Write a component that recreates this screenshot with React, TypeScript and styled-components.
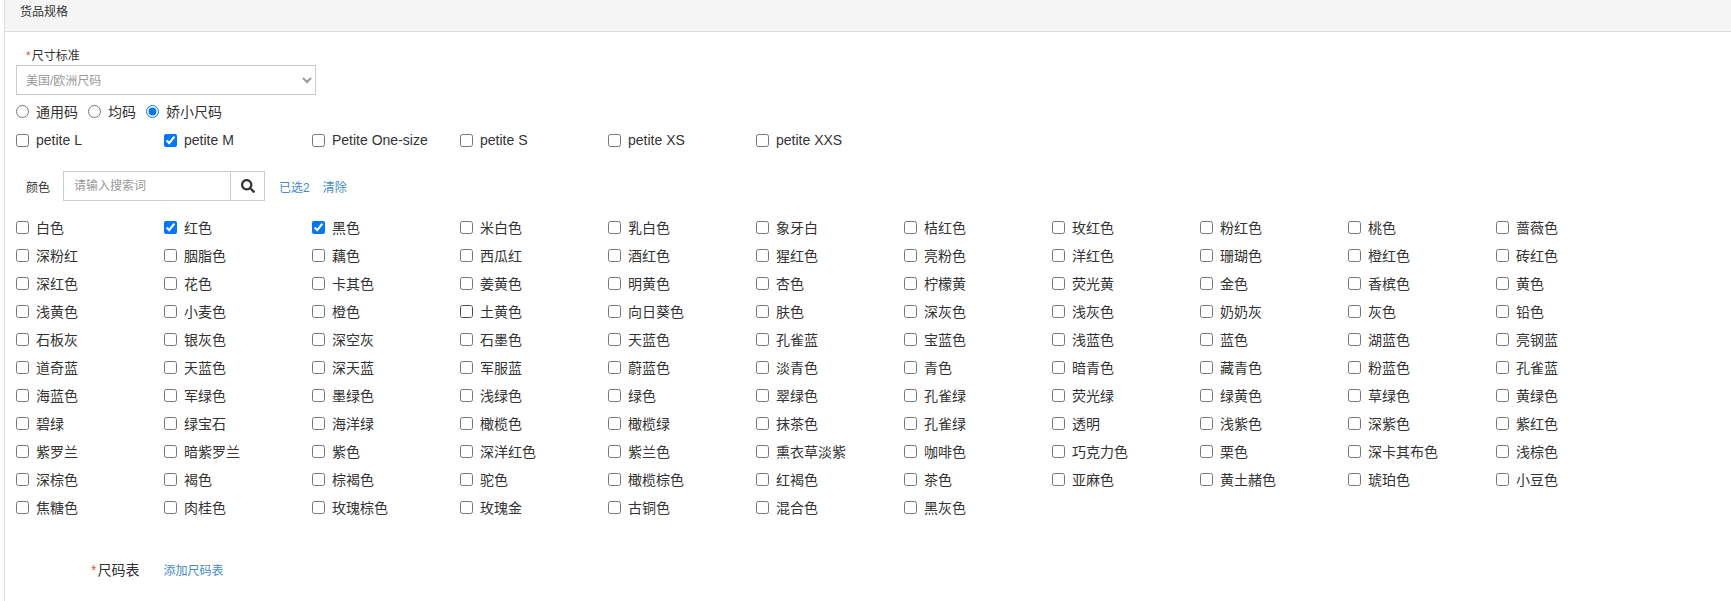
import styled, { createGlobalStyle } from "styled-components"
import { FaSearch } from "react-icons/fa"

const colorRows = [
  "白色 红色 黑色 米白色 乳白色 象牙白 桔红色 玫红色 粉红色 桃色 蔷薇色",
  "深粉红 胭脂色 藕色 西瓜红 酒红色 猩红色 亮粉色 洋红色 珊瑚色 橙红色 砖红色",
  "深红色 花色 卡其色 姜黄色 明黄色 杏色 柠檬黄 荧光黄 金色 香槟色 黄色",
  "浅黄色 小麦色 橙色 土黄色 向日葵色 肤色 深灰色 浅灰色 奶奶灰 灰色 铅色",
  "石板灰 银灰色 深空灰 石墨色 天蓝色 孔雀蓝 宝蓝色 浅蓝色 蓝色 湖蓝色 亮钢蓝",
  "道奇蓝 天蓝色 深天蓝 军服蓝 蔚蓝色 淡青色 青色 暗青色 藏青色 粉蓝色 孔雀蓝",
  "海蓝色 军绿色 墨绿色 浅绿色 绿色 翠绿色 孔雀绿 荧光绿 绿黄色 草绿色 黄绿色",
  "碧绿 绿宝石 海洋绿 橄榄色 橄榄绿 抹茶色 孔雀绿 透明 浅紫色 深紫色 紫红色",
  "紫罗兰 暗紫罗兰 紫色 深洋红色 紫兰色 熏衣草淡紫 咖啡色 巧克力色 栗色 深卡其布色 浅棕色",
  "深棕色 褐色 棕褐色 驼色 橄榄棕色 红褐色 茶色 亚麻色 黄土赭色 琥珀色 小豆色",
  "焦糖色 肉桂色 玫瑰棕色 玫瑰金 古铜色 混合色 黑灰色",
]
const colors = colorRows.join(" ").split(" ")
const sizes = ["petite L", "petite M", "Petite One-size", "petite S", "petite XS", "petite XXS"]
const sizeTypes = ["通用码", "均码", "娇小尺码"]
const checkedColors = [1, 2]
const hoveredColor = 36

export default function App() {
  return (
    <Panel>
      <GlobalStyle />
      <PanelHeader>货品规格</PanelHeader>
      <PanelBody>
        <FieldLabel><Star>*</Star>尺寸标准</FieldLabel>
        <StandardSelect defaultValue="us">
          <option value="us">美国/欧洲尺码</option>
        </StandardSelect>
        <RadioRow>
          {sizeTypes.map((name, i) => (
            <RadioLabel key={name}>
              <input type="radio" name="sizeType" defaultChecked={i === 2} />
              {name}
            </RadioLabel>
          ))}
        </RadioRow>
        <SizeGrid>
          {sizes.map((name) => (
            <OptionLabel key={name}>
              <OptionBox type="checkbox" defaultChecked={name === "petite M"} />
              {name}
            </OptionLabel>
          ))}
        </SizeGrid>
        <SearchRow>
          <SearchTitle>颜色</SearchTitle>
          <SearchGroup>
            <SearchInput placeholder="请输入搜索词" />
            <SearchButton type="button"><FaSearch size={14} /></SearchButton>
          </SearchGroup>
          <TextLink $left={14}>已选2</TextLink>
          <TextLink $left={13}>清除</TextLink>
        </SearchRow>
        <ColorGrid>
          {colors.map((name, i) => (
            <OptionLabel key={`${name}-${i}`}>
              <OptionBox
                type="checkbox"
                defaultChecked={checkedColors.includes(i)}
                $hovered={i === hoveredColor}
              />
              {name}
            </OptionLabel>
          ))}
        </ColorGrid>
        <SizeChartRow>
          <SizeChartLabel><Star>*</Star>尺码表</SizeChartLabel>
          <TextLink $left={24}>添加尺码表</TextLink>
        </SizeChartRow>
      </PanelBody>
    </Panel>
  )
}

const GlobalStyle = createGlobalStyle`
  html, body {
    margin: 0;
    background: #fff;
  }
  body {
    font-family: "Liberation Sans", "Noto Sans CJK SC", sans-serif;
    color: #333;
  }
`

const Panel = styled.div`
  margin-left: 4px;
  height: 601px;
  border-left: 1px solid #ddd;
  overflow: hidden;
`

const PanelHeader = styled.div`
  height: 28px;
  padding: 3px 0 0 15px;
  background: #f5f5f5;
  border-bottom: 1px solid #ddd;
  font-size: 12px;
  line-height: 18px;
`

const PanelBody = styled.div`
  padding: 15px 0 0 11px;
`

const FieldLabel = styled.div`
  padding-left: 10px;
  font-size: 12px;
  line-height: 18px;
`

const Star = styled.span`
  margin-right: 1px;
  color: #e0583f;
`

const StandardSelect = styled.select`
  display: block;
  width: 300px;
  height: 30px;
  padding: 2px 5px 0;
  background: #fff;
  border: 1px solid #ccc;
  border-radius: 0;
  font-family: inherit;
  font-size: 12px;
  color: #999;
  outline: none;
`

const RadioRow = styled.div`
  display: flex;
  gap: 10px;
  height: 30px;
  align-items: center;
  margin-top: 1px;
`

const RadioLabel = styled.label`
  display: flex;
  align-items: center;
  font-size: 14px;
  color: #333;

  input {
    margin: 0 7px 0 0;
  }
`

const SizeGrid = styled.div`
  display: grid;
  grid-template-columns: repeat(6, 148px);
  grid-auto-rows: 28px;
`

const OptionLabel = styled.label`
  display: flex;
  align-items: center;
  font-size: 14px;
  white-space: nowrap;
`

const OptionBox = styled.input<{ $hovered?: boolean }>`
  margin: 0 7px 0 0;
  ${(p) => p.$hovered && "filter: brightness(0.85) contrast(2);"}
`

const SearchRow = styled.div`
  display: flex;
  align-items: center;
  height: 30px;
  margin-top: 17px;
  padding-left: 10px;
  font-size: 12px;
`

const SearchTitle = styled.span`
  width: 37px;
`

const SearchGroup = styled.div`
  display: flex;
  width: 202px;
  height: 30px;
  box-sizing: border-box;
  border: 1px solid #ccc;
`

const SearchInput = styled.input`
  flex: 1;
  min-width: 0;
  padding: 0 10px;
  border: none;
  outline: none;
  font-family: inherit;
  font-size: 12px;
  color: #333;

  &::placeholder {
    color: #999;
  }
`

const SearchButton = styled.button`
  display: flex;
  align-items: center;
  justify-content: center;
  width: 34px;
  padding: 0;
  background: #fff;
  border: none;
  border-left: 1px solid #ccc;
  color: #333;
`

const TextLink = styled.a<{ $left: number }>`
  margin-left: ${(p) => p.$left}px;
  font-size: 12px;
  color: #428bca;
  cursor: pointer;
`

const ColorGrid = styled.div`
  display: grid;
  grid-template-columns: repeat(11, 148px);
  grid-auto-rows: 28px;
  margin-top: 12px;
`

const SizeChartRow = styled.div`
  display: flex;
  align-items: center;
  height: 30px;
  margin-top: 33px;
  padding-left: 75px;
`

const SizeChartLabel = styled.span`
  font-size: 14px;
`
